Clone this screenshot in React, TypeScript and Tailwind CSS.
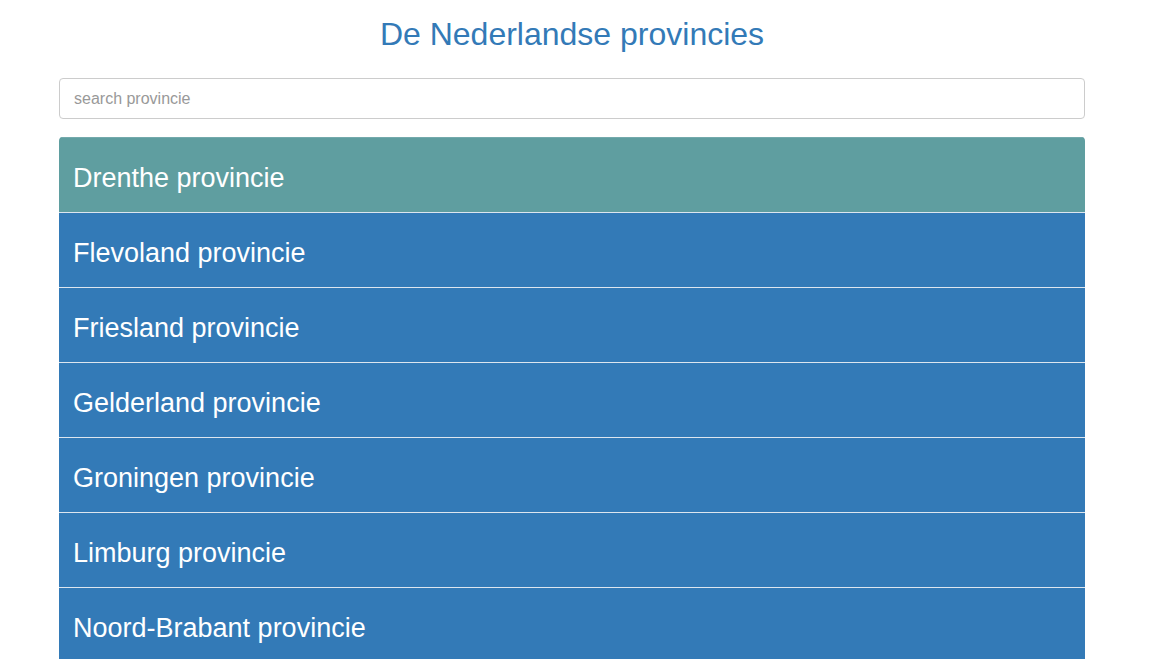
import { useState } from 'react';

const provincies = [
  'Drenthe',
  'Flevoland',
  'Friesland',
  'Gelderland',
  'Groningen',
  'Limburg',
  'Noord-Brabant',
  'Noord-Holland',
  'Overijssel',
  'Utrecht',
  'Zeeland',
  'Zuid-Holland'
];

export default function App() {
  const [query, setQuery] = useState('');
  const [active, setActive] = useState('Drenthe');

  const filtered = provincies.filter((p) =>
    p.toLowerCase().includes(query.toLowerCase())
  );

  return (
    <div className="min-h-screen bg-white font-['Liberation_Sans',Arial,sans-serif]">
      <div className="ml-[59px] w-[1026px]">
        <h1 className="pt-[14px] pb-[24px] text-center text-[32px] leading-[40px] text-[#337ab7]">
          De Nederlandse provincies
        </h1>
        <input
          type="text"
          value={query}
          onChange={(e) => setQuery(e.target.value)}
          placeholder="search provincie"
          className="block h-[41px] w-full rounded-[4px] border border-[#ccc] px-[14px] text-[16px] text-[#555] placeholder:text-[#999] outline-none"
        />
        <ul className="mt-[18px] overflow-hidden rounded-t-[4px]">
          {filtered.map((p) => (
            <li
              key={p}
              onClick={() => setActive(p)}
              className={`flex h-[75px] cursor-pointer items-center border-b border-[#dde6ef] px-[14px] pt-[7px] text-[27px] text-white first:h-[76px] first:border-t first:border-t-[#74aaac] ${
                active === p ? 'bg-[#5f9ea0]' : 'bg-[#337ab7]'
              }`}
            >
              {p} provincie
            </li>
          ))}
        </ul>
      </div>
    </div>
  );
}
